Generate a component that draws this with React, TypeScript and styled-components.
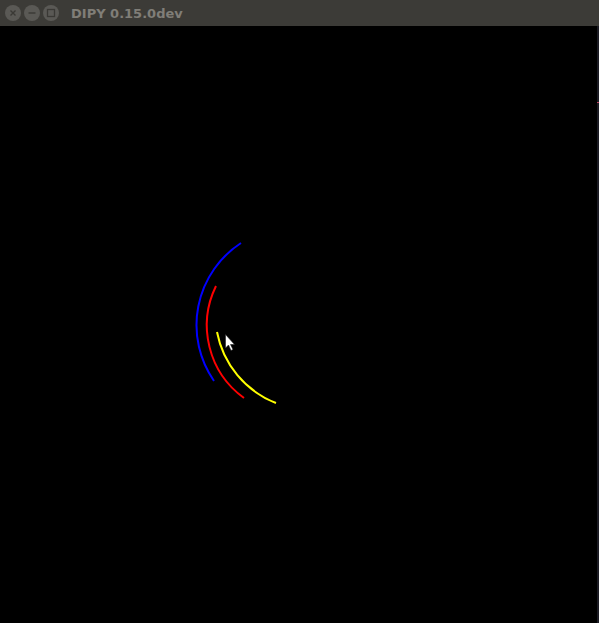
import React from "react";
import styled, { createGlobalStyle } from "styled-components";

const Global = createGlobalStyle`
  html, body { margin: 0; padding: 0; background: #000; }
  body { width: 599px; height: 623px; overflow: hidden; }
`;

const Window = styled.div`
  width: 599px;
  height: 623px;
  display: flex;
  flex-direction: column;
  background: #000;
`;

const TitleBar = styled.div`
  height: 26px;
  flex: 0 0 26px;
  background: #3c3b37;
  display: flex;
  align-items: center;
  padding-left: 5px;
  box-sizing: border-box;
`;

const Buttons = styled.div`
  display: flex;
  gap: 3px;
  margin-right: 12px;
`;

const WinButton = styled.div`
  width: 16px;
  height: 16px;
  border-radius: 50%;
  background: #5a5955;
  display: flex;
  align-items: center;
  justify-content: center;
`;

const Title = styled.span`
  font-family: "DejaVu Sans", "Open Sans", sans-serif;
  font-weight: 700;
  font-size: 13px;
  line-height: 16px;
  color: #807e78;
  margin-top: 1px;
`;

const Body = styled.div`
  flex: 1;
  display: flex;
`;

const Canvas = styled.div`
  flex: 1;
  background: #000;
  display: flex;
`;

const Strip = styled.div`
  width: 2px;
  background: #1c1c24;
  display: flex;
  flex-direction: column;
`;

const Tick = styled.div`
  height: 1px;
  margin-top: 76px;
  background: #b8405e;
`;

const Glyph = ({ kind }: { kind: "close" | "min" | "max" }) => (
  <svg width="10" height="10" viewBox="0 0 10 10">
    {kind === "close" && (
      <path d="M2.5 2.5 L7.5 7.5 M7.5 2.5 L2.5 7.5" stroke="#3a3935" strokeWidth="1.4" />
    )}
    {kind === "min" && <path d="M1.5 5 H8.5" stroke="#3a3935" strokeWidth="1.4" />}
    {kind === "max" && (
      <rect x="1.5" y="1.5" width="7" height="7" fill="none" stroke="#3a3935" strokeWidth="1.3" />
    )}
  </svg>
);

export default function App() {
  return (
    <>
      <Global />
      <Window>
        <TitleBar>
          <Buttons>
            <WinButton><Glyph kind="close" /></WinButton>
            <WinButton><Glyph kind="min" /></WinButton>
            <WinButton><Glyph kind="max" /></WinButton>
          </Buttons>
          <Title>DIPY 0.15.0dev</Title>
        </TitleBar>
        <Body>
          <Canvas>
            <svg width="597" height="597" viewBox="0 26 597 597">
              <path d="M 241 243 A 98 98 0 0 0 214 381" fill="none" stroke="#0000ff" strokeWidth="2" />
              <path d="M 216 286 A 89.5 89.5 0 0 0 244 398" fill="none" stroke="#ff0000" strokeWidth="2" />
              <path d="M 217 332 A 95.5 95.5 0 0 0 276 403" fill="none" stroke="#ffff00" strokeWidth="2" />
              <path
                d="M 225.5 334.5 L 225.5 348 L 228.5 345 L 231 350.5 L 233 349.5 L 230.5 344.5 L 234.5 344.5 Z"
                fill="#ffffff"
                stroke="#222"
                strokeWidth="0.6"
              />
            </svg>
          </Canvas>
          <Strip>
            <Tick />
          </Strip>
        </Body>
      </Window>
    </>
  );
}
